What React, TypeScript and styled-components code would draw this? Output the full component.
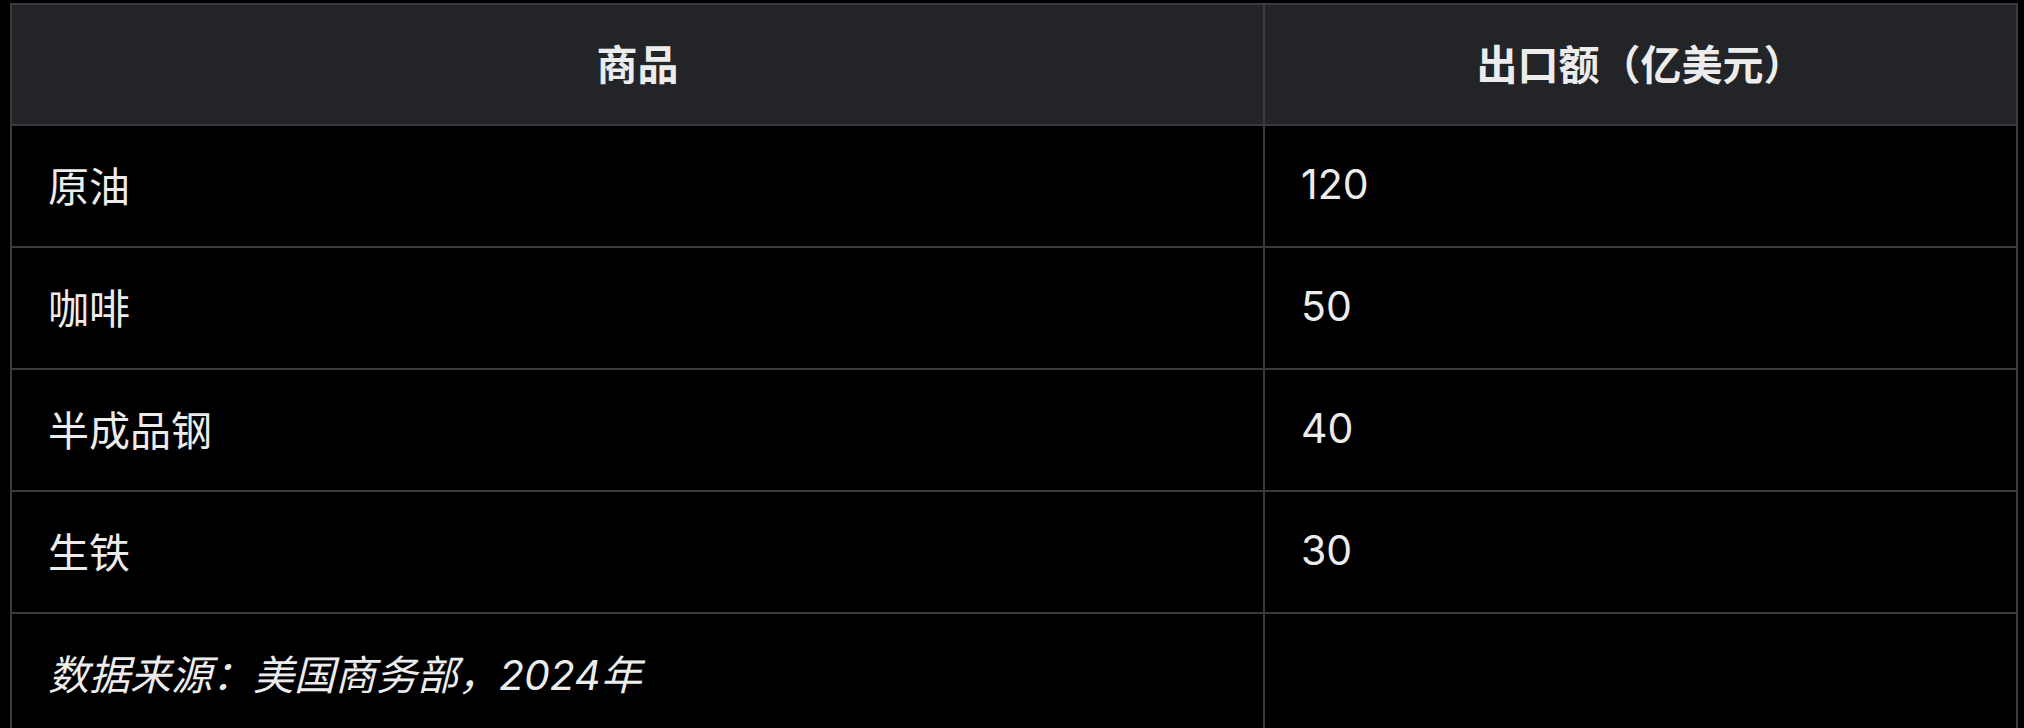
import React from "react";
import styled, { createGlobalStyle } from "styled-components";

const GlobalStyle = createGlobalStyle`
  html, body {
    margin: 0;
    padding: 0;
    background: #000;
  }
  body {
    font-family: "Inter", "Noto Sans CJK SC", sans-serif;
    color: #ececec;
  }
`;

const Page = styled.div`
  padding: 3px 6px 0 10px;
  background: #000;
  min-height: 728px;
  box-sizing: border-box;
`;

const Table = styled.table`
  width: 2008px;
  border-collapse: separate;
  border-spacing: 0;
  border-top: 2px solid #3a3b3f;
  border-left: 2px solid #3a3b3f;
  table-layout: fixed;
`;

const HeadCell = styled.th`
  box-sizing: border-box;
  height: 121px;
  padding: 0 36px 6px;
  background: #232428;
  border-right: 2px solid #3a3b3f;
  border-bottom: 2px solid #3a3b3f;
  font-size: 41px;
  font-weight: 700;
  text-align: center;
  color: #ececec;
`;

const Cell = styled.td<{ $note?: boolean }>`
  box-sizing: border-box;
  height: 122px;
  padding: 0 36px 4px;
  background: #000;
  border-right: 2px solid #3a3b3f;
  border-bottom: 2px solid #3a3b3f;
  font-size: 41px;
  font-weight: 400;
  font-style: ${p => (p.$note ? "italic" : "normal")};
  text-align: left;
  color: #ececec;
`;

interface Row {
  name: string;
  value: number;
}

const rows: Array<Row> = [
  { name: "原油", value: 120 },
  { name: "咖啡", value: 50 },
  { name: "半成品钢", value: 40 },
  { name: "生铁", value: 30 },
];

export const App = () => {
  return (
    <Page>
      <GlobalStyle />
      <Table>
        <colgroup>
          <col style={{ width: 1253 }} />
          <col style={{ width: 753 }} />
        </colgroup>
        <thead>
          <tr>
            <HeadCell>商品</HeadCell>
            <HeadCell>出口额（亿美元）</HeadCell>
          </tr>
        </thead>
        <tbody>
          {rows.map(row => (
            <tr key={row.name}>
              <Cell>{row.name}</Cell>
              <Cell>{row.value}</Cell>
            </tr>
          ))}
          <tr>
            <Cell $note>数据来源：美国商务部，2024年</Cell>
            <Cell />
          </tr>
        </tbody>
      </Table>
    </Page>
  );
};

export default App;
